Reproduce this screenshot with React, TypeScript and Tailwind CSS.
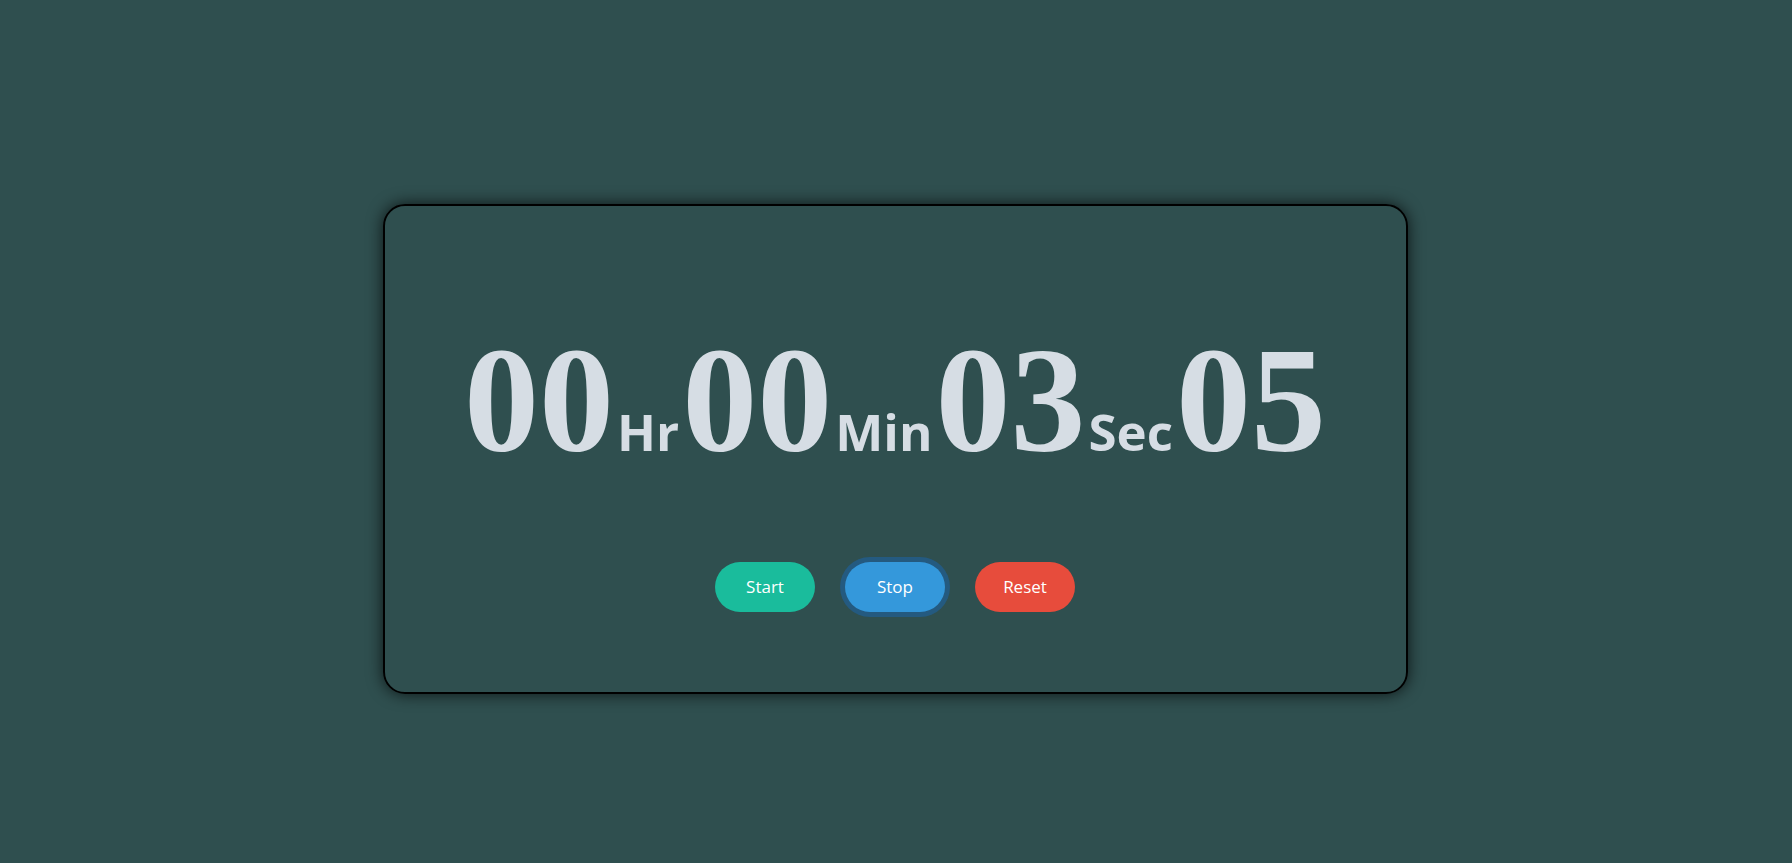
import { useState } from "react";

const digit = "font-['Liberation_Serif','Times_New_Roman',serif] font-bold text-[150px] leading-none";
const label = "font-['Open_Sans','Segoe_UI',sans-serif] font-bold text-[51px] leading-none mx-[3px]";

export default function App() {
  const [time] = useState({ hr: "00", min: "00", sec: "03", ms: "05" });

  return (
    <div className="min-h-[863px] w-full bg-[#2f4f4f] flex justify-center pt-[204px]">
      <div className="w-[1025px] h-[490px] -translate-x-[1px] rounded-[22px] border-2 border-black shadow-[0_0_16px_rgba(0,0,0,0.75)] flex flex-col items-center pt-[119px]">
        {/* Affichage du temps */}
        <div className={`${digit} text-[#d6dde4] whitespace-nowrap`}>
          <span>{time.hr}</span>
          <span className={label}>Hr</span>
          <span>{time.min}</span>
          <span className={label}>Min</span>
          <span>{time.sec}</span>
          <span className={label}>Sec</span>
          <span>{time.ms}</span>
        </div>

        {/* Boutons */}
        <div className="flex gap-[30px] mt-[87px] font-['Open_Sans','Segoe_UI',sans-serif] text-[17px] text-white">
          <button className="w-[100px] h-[50px] rounded-full bg-[#1abc9c]">Start</button>
          <button className="w-[100px] h-[50px] rounded-full bg-[#3498db] ring-[5px] ring-[#245a80]">Stop</button>
          <button className="w-[100px] h-[50px] rounded-full bg-[#e74c3c]">Reset</button>
        </div>
      </div>
    </div>
  );
}
